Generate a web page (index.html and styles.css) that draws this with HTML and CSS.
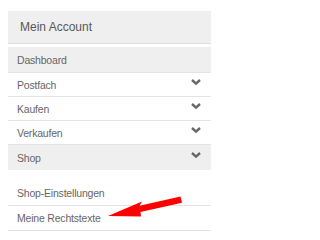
FILE: index.html
```html
<!DOCTYPE html>
<html lang="de">
<head>
<meta charset="utf-8">
<title>Mein Account</title>
<link rel="stylesheet" href="styles.css">
</head>
<body>
<div class="panel">
  <div class="panel-head">Mein Account</div>
  <ul class="menu">
    <li class="item active tall"><span class="label">Dashboard</span></li>
    <li class="item"><span class="label">Postfach</span><svg class="chev" viewBox="0 0 10 6" width="10" height="6"><polyline points="1,1 5,4.6 9,1"/></svg></li>
    <li class="item"><span class="label">Kaufen</span><svg class="chev" viewBox="0 0 10 6" width="10" height="6"><polyline points="1,1 5,4.6 9,1"/></svg></li>
    <li class="item"><span class="label">Verkaufen</span><svg class="chev" viewBox="0 0 10 6" width="10" height="6"><polyline points="1,1 5,4.6 9,1"/></svg></li>
    <li class="item active tall last"><span class="label">Shop</span><svg class="chev" viewBox="0 0 10 6" width="10" height="6"><polyline points="1,1 5,4.6 9,1"/></svg></li>
  </ul>
  <ul class="submenu">
    <li class="sub-item">Shop-Einstellungen</li>
    <li class="sub-item">Meine Rechtstexte</li>
  </ul>
</div>
<svg class="arrow" viewBox="0 0 212 231" width="212" height="231">
  <polygon points="108,216 142,201.5 139.5,205.8 180.5,196.4 182,202.8 140.5,212 141,216.5"/>
</svg>
</body>
</html>
```

FILE: styles.css
```css
html, body {
  background: #ffffff;
}
body {
  margin: 11px 0 0 8px;
  font-family: "Liberation Sans", Arial, sans-serif;
  position: relative;
}
.panel {
  width: 203px;
}
.panel-head {
  box-sizing: border-box;
  background: #efefef;
  border-bottom: 1px solid #dedede;
  height: 33px;
  display: flex;
  align-items: center;
  padding: 0 0 1px 12px;
  font-size: 12px;
  color: #585858;
}
.menu, .submenu {
  list-style: none;
  margin: 0;
  padding: 0;
}
.menu {
  margin-top: 3px;
}
.item {
  display: flex;
  align-items: center;
  justify-content: space-between;
  box-sizing: border-box;
  height: 24px;
  border-bottom: 1px solid #e3e3e3;
  padding: 0 10px 0 9px;
  font-size: 10.5px;
  letter-spacing: -0.2px;
  color: #666666;
}
.item.tall {
  height: 26px;
}
.item.last {
  border-bottom: none;
  height: 25px;
}
.item.active {
  background: #efefef;
}
.chev {
  display: block;
  margin-top: -5px;
}
.chev polyline {
  fill: none;
  stroke: #666666;
  stroke-width: 2.4;
}
.submenu {
  padding-top: 11px;
}
.sub-item {
  display: flex;
  align-items: center;
  box-sizing: border-box;
  height: 25px;
  border-bottom: 1px solid #e3e3e3;
  padding: 0 0 0 9px;
  font-size: 10.5px;
  letter-spacing: -0.2px;
  color: #666666;
}
.arrow {
  position: absolute;
  left: -8px;
  top: -11px;
  pointer-events: none;
}
.arrow polygon {
  fill: #ff0000;
}
```
